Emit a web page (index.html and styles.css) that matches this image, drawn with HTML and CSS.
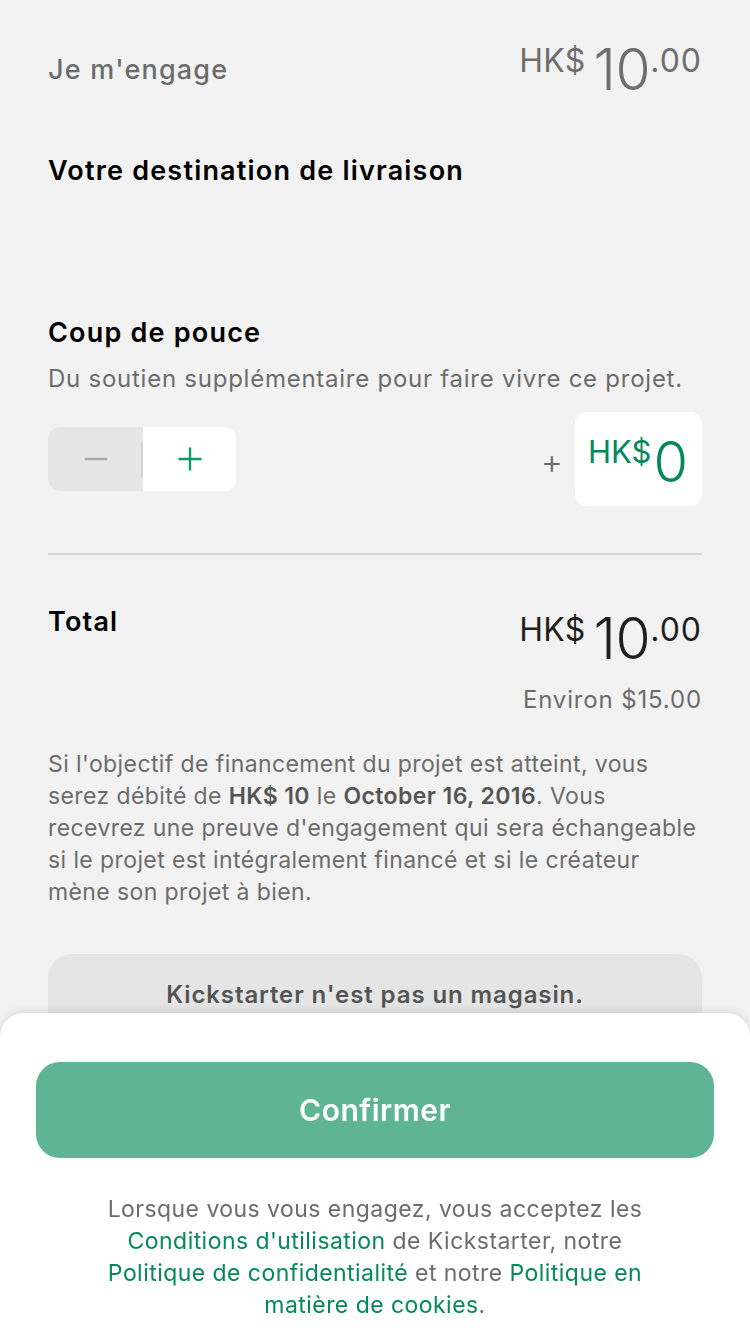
FILE: index.html
```html
<!DOCTYPE html>
<html lang="fr">
<head>
<meta charset="utf-8">
<title>Je m'engage</title>
<link rel="stylesheet" href="styles.css">
</head>
<body>
<main class="page">
  <section class="pledge-row">
    <span class="pledge-label">Je m'engage</span>
    <div class="price price-muted"><span class="cur">HK$</span><span class="int">10</span><span class="dec">.00</span></div>
  </section>

  <h2 class="heading dest">Votre destination de livraison</h2>

  <section class="bonus">
    <h2 class="heading">Coup de pouce</h2>
    <p class="sub">Du soutien supplémentaire pour faire vivre ce projet.</p>
    <div class="bonus-row">
      <div class="stepper">
        <div class="step step-minus">
          <svg width="24" height="24" viewBox="0 0 24 24"><line x1="1" y1="12" x2="23" y2="12" stroke="#a9a9a9" stroke-width="2.4"/></svg>
        </div>
        <span class="step-divider"></span>
        <div class="step step-plus">
          <svg width="24" height="24" viewBox="0 0 24 24"><line x1="0.5" y1="12" x2="23.5" y2="12" stroke="#0c9a67" stroke-width="2.4"/><line x1="12" y1="0.5" x2="12" y2="23.5" stroke="#0c9a67" stroke-width="2.4"/></svg>
        </div>
      </div>
      <div class="amount-wrap">
        <span class="amount-plus">+</span>
        <div class="amount"><span class="a-cur">HK$</span><span class="a-val">0</span></div>
      </div>
    </div>
  </section>

  <hr class="sep">

  <section class="total-row">
    <span class="total-label">Total</span>
    <div class="price price-dark"><span class="cur">HK$</span><span class="int">10</span><span class="dec">.00</span></div>
  </section>
  <p class="env">Environ $15.00</p>

  <p class="info">Si l'objectif de financement du projet est atteint, vous serez débité de <b>HK$ 10</b> le <b>October 16, 2016</b>. Vous recevrez une preuve d'engagement qui sera échangeable si le projet est intégralement financé et si le créateur mène son projet à bien.</p>

  <div class="notice">
    <p class="notice-title">Kickstarter n'est pas un magasin.</p>
    <p class="notice-text">Il s'agit d'un moyen de soutenir des projets créatifs.</p>
  </div>
</main>

<footer class="sheet">
  <button class="confirm">Confirmer</button>
  <p class="terms">Lorsque vous vous engagez, vous acceptez les <a href="#">Conditions d'utilisation</a> de Kickstarter, notre <a href="#">Politique de confidentialité</a> et notre <a href="#">Politique en matière de cookies</a>.</p>
</footer>
</body>
</html>
```

FILE: styles.css
```css
* { box-sizing: border-box; }
html, body { margin: 0; padding: 0; }
body {
  background: #f2f2f2;
  font-family: Inter, Roboto, "Liberation Sans", sans-serif;
  color: #6c6c6c;
  width: 750px;
  height: 1334px;
  overflow: hidden;
}
.page {
  padding: 39px 48px 0;
}
p, h2 { margin: 0; }

.pledge-row, .total-row {
  display: flex;
  justify-content: space-between;
  align-items: flex-start;
}
.pledge-label {
  margin-top: 15px;
  font-size: 27px;
  line-height: 32px;
  font-weight: 500;
  color: #6c6c6c;
  letter-spacing: 1.2px;
}
.price {
  display: flex;
  align-items: flex-start;
  margin-top: 2px;
}
.price .cur { font-size: 32px; line-height: 1; margin-top: 4px; margin-right: 8px; letter-spacing: 0.3px; }
.price .int { font-size: 57px; line-height: 1; letter-spacing: -0.5px; font-weight: 300; }
.price .dec { font-size: 32px; line-height: 1; margin-top: 4px; letter-spacing: 1px; }
.price-muted { color: #6e6e6e; }
.price-dark { color: #1f1f1f; }

.heading {
  font-size: 27px;
  line-height: 34px;
  font-weight: 600;
  color: #000;
  letter-spacing: 1.2px;
}
.dest { margin-top: 56px; }
.bonus { margin-top: 128px; }
.sub {
  margin-top: 13px;
  font-size: 24px;
  line-height: 32px;
  color: #6c6c6c;
  letter-spacing: 0.75px;
}
.bonus-row {
  margin-top: 17px;
  display: flex;
  justify-content: space-between;
  align-items: center;
}
.stepper {
  display: flex;
  align-items: center;
  width: 188px;
  height: 64px;
  border-radius: 12px;
  overflow: hidden;
  background: #fff;
}
.step {
  height: 64px;
  display: flex;
  align-items: center;
  justify-content: center;
}
.step-minus { width: 95px; background: #e6e6e6; }
.step-plus { flex: 1; background: #fff; }
.step-divider {
  width: 2px;
  height: 36px;
  background: #d2d2d2;
  margin-left: -2px;
}
.amount-wrap {
  display: flex;
  align-items: center;
  gap: 12px;
}
.amount-plus {
  font-size: 34px;
  line-height: 1;
  color: #6c6c6c;
  margin-top: 6px;
  font-weight: 300;
}
.amount {
  width: 127px;
  height: 94px;
  border-radius: 12px;
  background: #fff;
  color: #03895a;
  display: flex;
  align-items: flex-start;
  padding: 24px 0 0 13px;
}
.a-cur { font-size: 31px; line-height: 1; letter-spacing: 0; }
.a-val { font-size: 56px; line-height: 1; margin-top: -2px; margin-left: 2px; font-weight: 300; }

.sep {
  margin: 47px 0 0;
  border: 0;
  height: 2px;
  background: #d6d6d6;
}
.total-row { margin-top: 51px; }
.total-label {
  font-size: 27px;
  line-height: 32px;
  font-weight: 600;
  color: #000;
  letter-spacing: 1.2px;
}
.total-row .price { margin-top: 4px; }
.env {
  margin-top: 17px;
  text-align: right;
  font-size: 24px;
  line-height: 32px;
  color: #6c6c6c;
  letter-spacing: 0.85px;
}
.info {
  margin-top: 32px;
  font-size: 23px;
  line-height: 32px;
  color: #6c6c6c;
  letter-spacing: 0.4px;
}
.info b { font-weight: 600; color: #555; }

.notice {
  margin-top: 46px;
  background: #e5e5e5;
  border-radius: 24px;
  padding: 25px 30px 30px;
  text-align: center;
}
.notice-title {
  font-size: 24px;
  line-height: 32px;
  font-weight: 600;
  color: #555;
  letter-spacing: 0.9px;
}
.notice-text {
  margin-top: 14px;
  font-size: 22px;
  line-height: 30px;
}

.sheet {
  position: fixed;
  left: 0;
  right: 0;
  bottom: 0;
  height: 321px;
  background: #fff;
  border-radius: 24px 24px 0 0;
  box-shadow: 0 -2px 10px rgba(0,0,0,0.10);
  padding: 49px 36px 0;
  text-align: center;
}
.confirm {
  display: block;
  width: 100%;
  height: 96px;
  border: 0;
  border-radius: 24px;
  background: #5eb495;
  color: #fff;
  font-family: Inter, Roboto, "Liberation Sans", sans-serif;
  font-size: 30px;
  font-weight: 600;
  letter-spacing: 0.5px;
}
.terms {
  margin: 35px auto 0;
  max-width: 566px;
  font-size: 23px;
  line-height: 32px;
  color: #6c6c6c;
  letter-spacing: 0.45px;
}
.terms a { color: #03895a; text-decoration: none; }
```
